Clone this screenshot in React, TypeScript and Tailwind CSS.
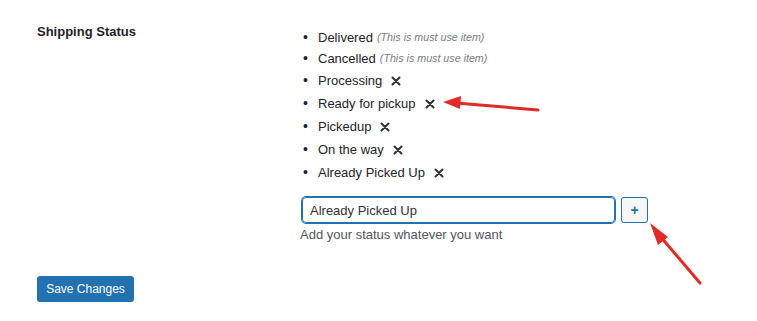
import { useState } from 'react';

const statuses = [
  { name: 'Delivered', locked: true },
  { name: 'Cancelled', locked: true },
  { name: 'Processing', locked: false },
  { name: 'Ready for pickup', locked: false },
  { name: 'Pickedup', locked: false },
  { name: 'On the way', locked: false },
  { name: 'Already Picked Up', locked: false },
];

const CloseMark = () => (
  <svg width="10" height="10" viewBox="0 0 10 10" className="ml-[9px] text-[#2c3338]">
    <path d="M1.5 1.5 L8.5 8.5 M8.5 1.5 L1.5 8.5" stroke="currentColor" strokeWidth="2" strokeLinecap="round" />
  </svg>
);

const App = () => {
  const [value, setValue] = useState('Already Picked Up');

  return (
    <div className="relative w-[757px] h-[321px] bg-white text-[#1d2327] font-['Liberation_Sans',Arial,sans-serif] text-[13px] overflow-hidden">
      <div className="flex pt-[21px]">
        {/* Label column */}
        <div className="w-[300px] pl-[37px] pt-[1px]">
          <span className="text-[13px] font-bold">Shipping Status</span>
        </div>

        {/* Field column */}
        <div className="flex flex-col">
          <ul className="flex flex-col pt-[6px]">
            {statuses.map((s) => (
              <li key={s.name} className={`flex items-center ${s.locked ? 'h-[21px]' : 'h-[23px]'}`}>
                <span className="w-[18px] pl-[3px] text-[14px]">•</span>
                <span>{s.name}</span>
                {s.locked ? (
                  <em className="ml-[4px] text-[10.7px] text-[#787c82]">(This is must use item)</em>
                ) : (
                  <CloseMark />
                )}
              </li>
            ))}
          </ul>

          <div className="flex items-center mt-[13px] ml-[2px]">
            <input
              value={value}
              onChange={(e) => setValue(e.target.value)}
              className="w-[313px] h-[26px] px-[7px] rounded-[4px] border border-[#2271b1] shadow-[0_0_0_1px_#2271b1] outline-none text-[13px] text-[#2c3338]"
            />
            <button className="ml-[6px] w-[27px] h-[26px] rounded-[3px] border border-[#2271b1] bg-[#f6f7f7] text-[#2271b1] text-[14px] font-bold leading-none">
              +
            </button>
          </div>
          <p className="mt-[2px] text-[#50575e]">Add your status whatever you want</p>
        </div>
      </div>

      <div className="pl-[37px] mt-[31px]">
        <button className="h-[26px] w-[97px] rounded-[3px] bg-[#2271b1] text-white text-[12px]">
          Save Changes
        </button>
      </div>

      {/* Annotation arrows */}
      <svg className="absolute left-0 top-0 pointer-events-none" width="757" height="321">
        <line x1="538" y1="110" x2="456" y2="103" stroke="#e02b27" strokeWidth="3" strokeLinecap="round" />
        <polygon points="443,102 461,96 460,109" fill="#e02b27" />
        <line x1="700" y1="283" x2="660" y2="236" stroke="#e02b27" strokeWidth="3" strokeLinecap="round" />
        <polygon points="650,223 668,237 658,245" fill="#e02b27" />
      </svg>
    </div>
  );
};

export default App;
